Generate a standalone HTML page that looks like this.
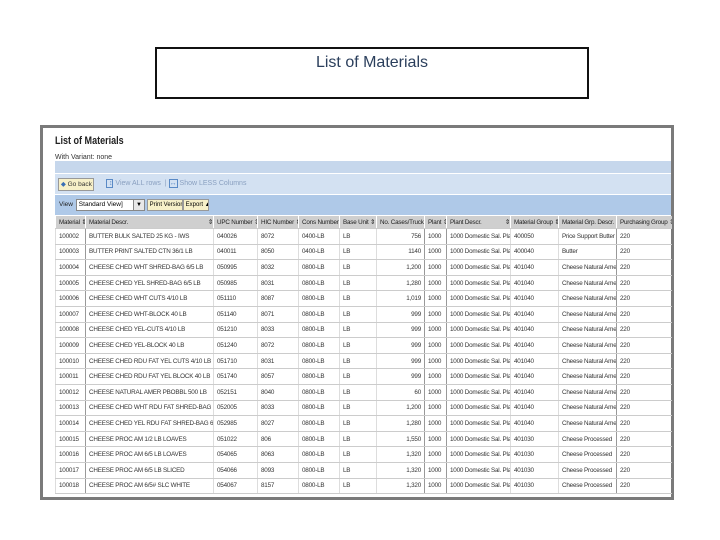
<!DOCTYPE html>
<html><head><meta charset="utf-8"><style>
body{margin:0;width:720px;height:540px;background:#fff;position:relative;overflow:hidden;font-family:"Liberation Sans",sans-serif}
.t{position:absolute;left:155px;top:47px;width:430px;height:48px;border:2px solid #111;}
.t div{text-align:center;margin-top:5px;font-size:16px;color:#2b3f5c}
.f{position:absolute;left:40px;top:125px;width:628px;height:369px;border:3px solid #7a7a7a;background:#fff}
.a{position:absolute;white-space:nowrap}
table{position:absolute;left:12px;top:88px;border-collapse:collapse;table-layout:fixed;width:616px;font-size:6.3px;letter-spacing:-0.2px;color:#333}
td{height:14.6px;border-bottom:1px solid #ccc;padding:0 0 0 3px;white-space:nowrap;overflow:hidden;border-left:1px solid #ddd}
tr.h td{height:12px;background:#cfcfcf;border-left:1px solid #fff;color:#222}
td.r{text-align:right;padding-right:3px}
td.k{border-left:1px solid #999}
</style></head><body>
<div class="t"><div>List of Materials</div></div>
<div class="f">
<div class="a" style="left:12px;top:7px;font-size:11px;font-weight:bold;color:#222;transform:scaleX(.82);transform-origin:left">List of Materials</div>
<div class="a" style="left:12px;top:26px;font-size:7px;color:#333">With Variant: none</div>
<div class="a" style="left:12px;top:33px;width:616px;height:12px;background:#c6d7ec"></div>
<div class="a" style="left:12px;top:46px;width:616px;height:20px;background:#d3e1f2"></div>
<div class="a" style="left:15px;top:50px;width:34px;height:11px;background:#f7f0c8;border:1px solid #999;font-size:6.5px;line-height:11px;color:#333">&nbsp;<span style="color:#3a6fb5">◆</span> Go back</div>
<div class="a" style="left:63px;top:52px;font-size:7px;color:#8aa0c0"><span style="border:1px solid #5a8ac6;color:#5a8ac6">&nbsp;↕</span> View ALL rows &nbsp;| <span style="border:1px solid #5a8ac6;color:#5a8ac6">↔</span> Show LESS Columns</div>
<div class="a" style="left:12px;top:67px;width:616px;height:20px;background:#afc9e8"></div>
<div class="a" style="left:16px;top:73px;font-size:6.5px;color:#222">View</div>
<div class="a" style="left:33px;top:71px;width:56px;height:10px;background:#fff;border:1px solid #888;font-size:6.5px;line-height:10px">&nbsp;Standard View]</div>
<div class="a" style="left:90px;top:71px;width:10px;height:10px;background:#e8e8e8;border:1px solid #888;font-size:6px;text-align:center;line-height:10px">▼</div>
<div class="a" style="left:104px;top:71px;width:34px;height:10px;background:#f7f0c8;border:1px solid #999;font-size:6px;line-height:10px;overflow:hidden">&nbsp;Print Version</div>
<div class="a" style="left:140px;top:71px;width:24px;height:10px;background:#f7f0c8;border:1px solid #999;font-size:6px;line-height:10px;overflow:hidden">&nbsp;Export ▲</div>
<table>
<colgroup><col style="width:30px"><col style="width:128px"><col style="width:44px"><col style="width:41px"><col style="width:41px"><col style="width:37px"><col style="width:48px"><col style="width:22px"><col style="width:64px"><col style="width:48px"><col style="width:58px"><col style="width:55px"></colgroup>
<tr class="h"><td>Material ⇕</td><td>Material Descr. <span style="float:right">⇕</span></td><td>UPC Number ⇕</td><td>HIC Number ⇕</td><td>Cons Number ⇕</td><td>Base Unit ⇕</td><td>No. Cases/Truck ⇕</td><td>Plant ⇕</td><td>Plant Descr. <span style="float:right">⇕</span></td><td>Material Group ⇕</td><td>Material Grp. Descr. ⇕</td><td>Purchasing Group ⇕</td></tr>
<tr><td>100002</td><td class="k">BUTTER BULK SALTED 25 KG - IWS</td><td>040026</td><td>8072</td><td>0400-LB</td><td>LB</td><td class="r">756</td><td class="k">1000</td><td class="k">1000 Domestic Sal. Plant</td><td>400050</td><td>Price Support Butter</td><td class="k">220</td></tr>
<tr><td>100003</td><td class="k">BUTTER PRINT SALTED CTN 36/1 LB</td><td>040011</td><td>8050</td><td>0400-LB</td><td>LB</td><td class="r">1140</td><td class="k">1000</td><td class="k">1000 Domestic Sal. Plant</td><td>400040</td><td>Butter</td><td class="k">220</td></tr>
<tr><td>100004</td><td class="k">CHEESE CHED WHT SHRED-BAG 6/5 LB</td><td>050995</td><td>8032</td><td>0800-LB</td><td>LB</td><td class="r">1,200</td><td class="k">1000</td><td class="k">1000 Domestic Sal. Plant</td><td>401040</td><td>Cheese Natural Amer</td><td class="k">220</td></tr>
<tr><td>100005</td><td class="k">CHEESE CHED YEL SHRED-BAG 6/5 LB</td><td>050985</td><td>8031</td><td>0800-LB</td><td>LB</td><td class="r">1,280</td><td class="k">1000</td><td class="k">1000 Domestic Sal. Plant</td><td>401040</td><td>Cheese Natural Amer</td><td class="k">220</td></tr>
<tr><td>100006</td><td class="k">CHEESE CHED WHT CUTS 4/10 LB</td><td>051110</td><td>8087</td><td>0800-LB</td><td>LB</td><td class="r">1,019</td><td class="k">1000</td><td class="k">1000 Domestic Sal. Plant</td><td>401040</td><td>Cheese Natural Amer</td><td class="k">220</td></tr>
<tr><td>100007</td><td class="k">CHEESE CHED WHT-BLOCK 40 LB</td><td>051140</td><td>8071</td><td>0800-LB</td><td>LB</td><td class="r">999</td><td class="k">1000</td><td class="k">1000 Domestic Sal. Plant</td><td>401040</td><td>Cheese Natural Amer</td><td class="k">220</td></tr>
<tr><td>100008</td><td class="k">CHEESE CHED YEL-CUTS 4/10 LB</td><td>051210</td><td>8033</td><td>0800-LB</td><td>LB</td><td class="r">999</td><td class="k">1000</td><td class="k">1000 Domestic Sal. Plant</td><td>401040</td><td>Cheese Natural Amer</td><td class="k">220</td></tr>
<tr><td>100009</td><td class="k">CHEESE CHED YEL-BLOCK 40 LB</td><td>051240</td><td>8072</td><td>0800-LB</td><td>LB</td><td class="r">999</td><td class="k">1000</td><td class="k">1000 Domestic Sal. Plant</td><td>401040</td><td>Cheese Natural Amer</td><td class="k">220</td></tr>
<tr><td>100010</td><td class="k">CHEESE CHED RDU FAT YEL CUTS 4/10 LB</td><td>051710</td><td>8031</td><td>0800-LB</td><td>LB</td><td class="r">999</td><td class="k">1000</td><td class="k">1000 Domestic Sal. Plant</td><td>401040</td><td>Cheese Natural Amer</td><td class="k">220</td></tr>
<tr><td>100011</td><td class="k">CHEESE CHED RDU FAT YEL BLOCK 40 LB</td><td>051740</td><td>8057</td><td>0800-LB</td><td>LB</td><td class="r">999</td><td class="k">1000</td><td class="k">1000 Domestic Sal. Plant</td><td>401040</td><td>Cheese Natural Amer</td><td class="k">220</td></tr>
<tr><td>100012</td><td class="k">CHEESE NATURAL AMER PBOBBL 500 LB</td><td>052151</td><td>8040</td><td>0800-LB</td><td>LB</td><td class="r">60</td><td class="k">1000</td><td class="k">1000 Domestic Sal. Plant</td><td>401040</td><td>Cheese Natural Amer</td><td class="k">220</td></tr>
<tr><td>100013</td><td class="k">CHEESE CHED WHT RDU FAT SHRED-BAG 6/5 LB</td><td>052005</td><td>8033</td><td>0800-LB</td><td>LB</td><td class="r">1,200</td><td class="k">1000</td><td class="k">1000 Domestic Sal. Plant</td><td>401040</td><td>Cheese Natural Amer</td><td class="k">220</td></tr>
<tr><td>100014</td><td class="k">CHEESE CHED YEL RDU FAT SHRED-BAG 6/5 LB</td><td>052985</td><td>8027</td><td>0800-LB</td><td>LB</td><td class="r">1,280</td><td class="k">1000</td><td class="k">1000 Domestic Sal. Plant</td><td>401040</td><td>Cheese Natural Amer</td><td class="k">220</td></tr>
<tr><td>100015</td><td class="k">CHEESE PROC AM 1/2 LB LOAVES</td><td>051022</td><td>806</td><td>0800-LB</td><td>LB</td><td class="r">1,550</td><td class="k">1000</td><td class="k">1000 Domestic Sal. Plant</td><td>401030</td><td>Cheese Processed</td><td class="k">220</td></tr>
<tr><td>100016</td><td class="k">CHEESE PROC AM 6/5 LB LOAVES</td><td>054065</td><td>8063</td><td>0800-LB</td><td>LB</td><td class="r">1,320</td><td class="k">1000</td><td class="k">1000 Domestic Sal. Plant</td><td>401030</td><td>Cheese Processed</td><td class="k">220</td></tr>
<tr><td>100017</td><td class="k">CHEESE PROC AM 6/5 LB SLICED</td><td>054066</td><td>8093</td><td>0800-LB</td><td>LB</td><td class="r">1,320</td><td class="k">1000</td><td class="k">1000 Domestic Sal. Plant</td><td>401030</td><td>Cheese Processed</td><td class="k">220</td></tr>
<tr><td>100018</td><td class="k">CHEESE PROC AM 6/5# SLC WHITE</td><td>054067</td><td>8157</td><td>0800-LB</td><td>LB</td><td class="r">1,320</td><td class="k">1000</td><td class="k">1000 Domestic Sal. Plant</td><td>401030</td><td>Cheese Processed</td><td class="k">220</td></tr>
</table>
</div>
</body></html>
